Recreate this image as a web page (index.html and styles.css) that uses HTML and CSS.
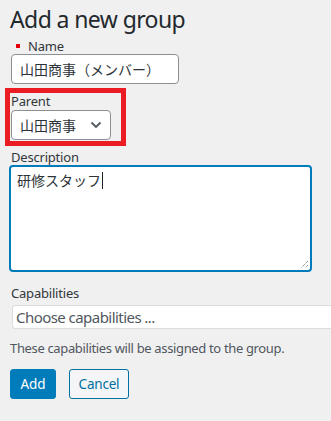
FILE: index.html
```html
<!DOCTYPE html>
<html lang="en">
<head>
  <meta charset="UTF-8" />
  <meta name="viewport" content="width=device-width, initial-scale=1.0" />
  <title>Add a new group</title>
  <link rel="stylesheet" href="styles.css">
</head>
<body>
  <div class="wrap">
    <h2 class="title">Add a new group</h2>

    <div class="field">
      <label class="label required" for="groupName"><span class="mark"></span>Name</label>
      <input class="text-input" type="text" id="groupName" value="山田商事（メンバー）" />
    </div>

    <div class="field field-parent">
      <label class="label">Parent</label>
      <div class="select">
        <span>山田商事</span>
        <svg width="12" height="8" viewBox="0 0 12 8"><path d="M1.5 1.5 L6 6 L10.5 1.5" fill="none" stroke="#50575e" stroke-width="1.8"/></svg>
      </div>
    </div>

    <div class="field field-desc">
      <label class="label">Description</label>
      <div class="textarea">
        <span>研修スタッフ</span><span class="caret"></span>
        <svg class="grip" width="9" height="9" viewBox="0 0 9 9"><path d="M8 1 L1 8 M8 5 L5 8" stroke="#666" stroke-width="1" stroke-dasharray="1 1"/></svg>
      </div>
    </div>

    <div class="field field-caps">
      <label class="label">Capabilities</label>
      <div class="caps-input">Choose capabilities ...</div>
      <p class="help">These capabilities will be assigned to the group.</p>
    </div>

    <div class="actions">
      <button class="btn btn-primary">Add</button>
      <button class="btn btn-secondary">Cancel</button>
    </div>
  </div>
</body>
</html>
```

FILE: styles.css
```css
html, body {
  margin: 0;
  padding: 0;
  overflow: hidden;
}
body {
  background: #f0f0f1;
  font-family: 'Noto Sans', 'Noto Sans CJK JP', sans-serif;
  color: #32373c;
}
.wrap {
  padding: 4px 0 0 10px;
}
.title {
  font-size: 23px;
  font-weight: 400;
  line-height: 30px;
  letter-spacing: -0.6px;
  color: #23282d;
  margin: 0 0 4px 0;
}
.field {
  margin-bottom: 9px;
}
.label {
  display: flex;
  align-items: center;
  font-size: 13px;
  line-height: 16px;
  letter-spacing: -0.2px;
  padding-left: 1px;
}
.mark {
  width: 4px;
  height: 4px;
  background: #e2000f;
  margin: 0 8px 0 5px;
}
.text-input {
  display: block;
  box-sizing: border-box;
  width: 168px;
  height: 30px;
  margin: 0 0 0 1px;
  padding: 0 8px;
  border: 1px solid #8c8f94;
  border-radius: 4px;
  background: #fff;
  font-family: 'Noto Sans CJK JP', sans-serif;
  font-size: 14px;
  color: #2c3338;
}
.field-parent {
  width: 111px;
  padding-bottom: 1px;
  outline: 5px solid #ec1c24;
  margin-bottom: 8px;
}
.field-parent .label {
  margin-bottom: 1px;
}
.select {
  box-sizing: border-box;
  width: 100px;
  height: 30px;
  margin-left: 1px;
  display: flex;
  align-items: center;
  justify-content: space-between;
  padding: 0 8px 0 8px;
  border: 1px solid #8c8f94;
  border-radius: 4px;
  background: #fff;
  font-family: 'Noto Sans CJK JP', sans-serif;
  font-size: 14px;
  color: #2c3338;
}
.textarea {
  position: relative;
  box-sizing: border-box;
  width: 303px;
  height: 107px;
  margin-left: -1px;
  padding: 3px 6px;
  border: 2px solid #007cba;
  border-radius: 4px;
  background: #fff;
  font-family: 'Noto Sans CJK JP', sans-serif;
  font-size: 14px;
  line-height: 20px;
  color: #2c3338;
}
.caret {
  display: inline-block;
  width: 1px;
  height: 17px;
  background: #1d2327;
  vertical-align: -3px;
  margin-left: 1px;
}
.grip {
  position: absolute;
  right: 1px;
  bottom: 1px;
}
.field-desc {
  margin-bottom: 13px;
}
.caps-input {
  box-sizing: border-box;
  height: 24px;
  margin: 4px 0 0 2px;
  padding: 0 3px;
  border: 1px solid #dcdcde;
  border-right: none;
  border-radius: 3px 0 0 3px;
  background: #fff;
  font-size: 15px;
  line-height: 22px;
  letter-spacing: -0.55px;
  color: #50575e;
}
.help {
  margin: 11px 0 0 0;
  font-size: 13px;
  line-height: 16px;
  letter-spacing: -0.35px;
  color: #50575e;
}
.field-caps {
  margin-bottom: 13px;
}
.actions {
  display: flex;
  gap: 13px;
}
.btn {
  box-sizing: border-box;
  height: 30px;
  padding: 0;
  border-radius: 3px;
  font-family: inherit;
  font-size: 13.5px;
  cursor: pointer;
}
.btn-primary {
  width: 46px;
  background: #007cba;
  border: 1px solid #007cba;
  color: #fff;
}
.btn-secondary {
  width: 60px;
  background: #f3f5f6;
  border: 1px solid #0071a1;
  color: #0071a1;
  letter-spacing: -0.2px;
}
```
